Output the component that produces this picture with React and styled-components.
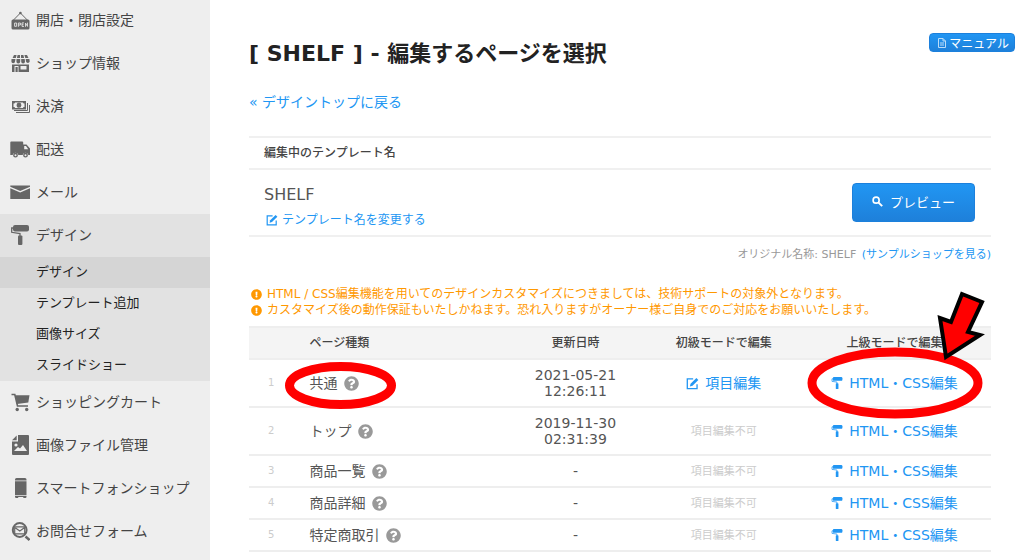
import React from 'react';
import styled, { createGlobalStyle, css } from 'styled-components';
import { FaExclamationCircle, FaQuestionCircle } from 'react-icons/fa';

const GlobalStyle = createGlobalStyle`
  * {
    box-sizing: border-box;
  }

  body {
    margin: 0;
    background: #fff;
    color: #555;
    font-family: 'DejaVu Sans', 'Noto Sans CJK JP', sans-serif;
    font-size: 14px;
    line-height: 16px;
  }

  a {
    color: #2196f3;
    text-decoration: none;
  }
`;

const Layout = styled.div`
  display: flex;
  height: 100vh;
  overflow: hidden;
`;

/* sidebar */
const Sidebar = styled.nav`
  flex: 0 0 210px;
  background: #eee;
`;

const Menu = styled.ul`
  margin: -1px 0 0;
  padding: 0;
  list-style: none;
`;

const MenuLink = styled.a`
  display: flex;
  align-items: center;
  gap: 6px;
  height: 43px;
  padding: 0 0 2px 10px;
  color: #444;
  background: ${props => props.$active ? '#e2e2e2' : 'transparent'};

  svg {
    flex: none;
    color: #666;
  }
`;

const SubMenu = styled.ul`
  margin: 0;
  padding: 0;
  list-style: none;
  background: #e2e2e2;
`;

const SubLink = styled.a`
  display: block;
  padding: 0 0 2px 36px;
  color: #222;
  font-size: 13px;
  line-height: 29px;
  ${props => props.$active && css`
    background: #d5d5d5;
  `}
`;

/* main */
const Main = styled.main`
  flex: 1;
  min-width: 0;
  padding: 33px 9px 0 39px;
`;

const Header = styled.header`
  display: flex;
  justify-content: space-between;
  align-items: flex-start;
`;

const Title = styled.h1`
  margin: 0;
  color: #222;
  font-size: 22px;
  line-height: 42px;
`;

const BlueButton = styled.button`
  display: flex;
  align-items: center;
  justify-content: center;
  border: 1px solid #1c80dc;
  border-radius: 4px;
  background: linear-gradient(#2196f3, #1e80da);
  color: #fff;
  font-family: inherit;
  cursor: pointer;
`;

const ManualButton = styled(BlueButton)`
  gap: 3px;
  height: 19px;
  padding: 0 5px 0 8px;
  font-size: 12px;
`;

const PreviewButton = styled(BlueButton)`
  gap: 7px;
  width: 123px;
  height: 39px;
  padding-bottom: 4px;
  font-size: 13px;
`;

const Content = styled.div`
  margin-right: 24px;
`;

const BackLink = styled.a`
  display: inline-block;
  margin-top: 17px;
  line-height: 20px;
`;

const TemplateBox = styled.section`
  margin-top: 24px;
  border-top: 2px solid #f0f0f0;
  border-bottom: 2px solid #f0f0f0;
`;

const TemplateHead = styled.h2`
  margin: 0;
  padding: 0 15px;
  border-bottom: 2px solid #f0f0f0;
  color: #444;
  font-size: 12px;
  font-weight: 500;
  line-height: 30px;
`;

const TemplateBody = styled.div`
  display: flex;
  align-items: center;
  justify-content: space-between;
  height: 65px;
  padding: 0 16px 0 15px;
`;

const TemplateInfo = styled.div`
  padding-top: 8px;
`;

const TemplateName = styled.div`
  margin-bottom: 8px;
  font-size: 16px;
  line-height: 18px;
`;

const RenameLink = styled.a`
  display: flex;
  align-items: center;
  gap: 4px;
  padding-left: 2px;
  font-size: 12px;
`;

const OriginalName = styled.p`
  margin: 10px 0 23px;
  text-align: right;
  color: #999;
  font-size: 11px;

  a {
    margin-left: 2px;
  }
`;

const Notice = styled.ul`
  margin: 0 0 8px;
  padding: 0 0 0 2px;
  list-style: none;
  color: #ff9800;
  font-size: 12px;

  li {
    display: flex;
    align-items: center;
    gap: 5px;
    white-space: nowrap;
  }
`;

const PageTable = styled.table`
  width: 100%;
  table-layout: fixed;
  border-collapse: collapse;

  th {
    height: 32px;
    padding: 0;
    border-top: 2px solid #eee;
    border-bottom: 2px solid #eee;
    background: #f4f4f4;
    color: #444;
    font-size: 12px;
    font-weight: 500;
  }

  td {
    height: 30px;
    padding: 6px 0;
    border-bottom: 2px solid #eee;
    text-align: center;
  }
`;

const Col = styled.col`
  width: ${props => props.$width};
`;

const NameHead = styled.th`
  padding-left: 16px !important;
  text-align: left;
`;

const NumberCell = styled.td`
  color: #ccc;
  font-size: 10px;
`;

const NameCell = styled.td`
  padding-left: 16px !important;
  text-align: left !important;
`;

const CellInner = styled.span`
  position: relative;
  display: inline-flex;
  align-items: center;
  gap: 6px;
  vertical-align: top;

  svg {
    flex: none;
  }
`;

const Help = styled(FaQuestionCircle)`
  color: #999;
`;

const DateTime = styled.time`
  display: block;
  padding: 1px 0;

  span {
    display: block;
  }
`;

const Disabled = styled.span`
  color: #ccc;
  font-size: 11px;
`;

/* hand-drawn marks that lie over the table */
const Mark = styled.svg`
  position: absolute;
  z-index: 1;
  top: ${props => props.$top};
  left: ${props => props.$left};
  overflow: visible;
  pointer-events: none;
`;

const Icon = ({ size = 20, children }) => (
  <svg width={size} height={size} viewBox="0 0 20 20" fill="currentColor" aria-hidden="true">
    {children}
  </svg>
);

const SignIcon = () => (
  <Icon>
    <path d="M3.5 10 10.4 3l6.9 7" fill="none" stroke="currentColor" />
    <circle cx="10.4" cy="3" r="1.3" />
    <rect x="1.5" y="9.5" width="18" height="10" rx="1.5" />
    <path d="M4.6 13h2v3.3h-2zM8.4 16.8V13h2v2h-2M14 12.9h-2v3.5h2M12 14.7h1.5M15.5 16.8V13l2 3.4v-3.8" fill="none" stroke="#e4e4e4" strokeWidth="0.9" />
  </Icon>
);

const ShopIcon = () => (
  <Icon>
    <path d="M4 2h2.6L5.8 5H2.6zM7.6 2h2.4v3H6.9zM11 2h2.4l.7 3H11zM14.4 2H17l1.5 3h-3.2zM1.5 6h4L5 8.5a1.8 1.8 0 0 1-3.6 0zM6.5 6h3.7v2.5a1.9 1.9 0 0 1-3.8 0zM11.2 6h3.5l.3 2.5a1.9 1.9 0 0 1-3.8 0zM15.7 6h3.7l.3 2.5a1.9 1.9 0 0 1-3.7 0z" />
    <path d="M2 11.5h17V19H2zM4.5 13v6h4v-6zM10.5 13v3.5h6V13z" fillRule="evenodd" />
    <path d="M5.5 14h2.2v5H5.5z" />
  </Icon>
);

const MoneyIcon = () => (
  <Icon>
    <path d="M2 5h14v8.5H2zM3.5 7.5V11c1 0 1.5.3 1.5 1h8c0-.7.5-1 1.5-1V7.5c-1 0-1.500-.3-1.500-1H5c0 .7-.5 1-1.500 1z" fillRule="evenodd" />
    <ellipse cx="9" cy="9.2" rx="2.3" ry="2.6" />
    <path d="M4 14.5h13.500V7M6 16.5h13.500V9" fill="none" stroke="currentColor" />
  </Icon>
);

const TruckIcon = () => (
  <Icon>
    <path d="M1.2 2.5h11a1 1 0 0 1 1 1v2h3.3L20 9.500V16h-1.600a3 3 0 0 0-5.800 0H8.400a3 3 0 0 0-5.800 0H.3V3.500a1 1 0 0 1 .9-1zM14.2 7v3.200h4L16 7z" fillRule="evenodd" />
    <circle cx="5.5" cy="16.2" r="1.7" fill="none" stroke="currentColor" strokeWidth="1.4" />
    <circle cx="15.5" cy="16.2" r="1.7" fill="none" stroke="currentColor" strokeWidth="1.4" />
  </Icon>
);

const MailIcon = () => (
  <Icon>
    <path d="M.3 3.5H20v1.300L10.200 9 .3 4.800z" />
    <path d="M.3 6.300 10.200 10.600 20 6.300V17H.3z" />
  </Icon>
);

const RollerIcon = ({ size }) => (
  <Icon size={size}>
    <rect x="3" y="0" width="16" height="6.4" rx="2" />
    <path d="M3 3H1.700v4.300l8.300 1.200V11" fill="none" stroke="currentColor" strokeWidth="1.3" />
    <rect x="8" y="10.5" width="4.4" height="9.5" rx="1" />
  </Icon>
);

const CartIcon = () => (
  <Icon>
    <path d="M1.500 2.500h3.300l2.700 11.500H18" fill="none" stroke="currentColor" strokeWidth="1.6" />
    <path d="M5.200 3.200h14.300l-1.200 7.300L7 12z" />
    <circle cx="7.2" cy="17.5" r="1.7" />
    <circle cx="16.7" cy="17.5" r="1.7" />
  </Icon>
);

const ImageIcon = () => (
  <Icon>
    <path d="M8 0h10a1 1 0 0 1 1 1v18a1 1 0 0 1-1 1H3a1 1 0 0 1-1-1V6.500h6zM4 16h13l-4-6-3 3.500L8 12z" fillRule="evenodd" />
    <path d="M6.700.4v4.800H2z" />
    <circle cx="6" cy="10" r="1.6" fill="#eee" />
  </Icon>
);

const PhoneIcon = () => (
  <Icon>
    <path d="M6.500 0H15a1.500 1.500 0 0 1 1.500 1.500v1H5v-1A1.500 1.500 0 0 1 6.500 0zM5 3.300h11.500V17H5zM5 17.800h11.500v1a1.200 1.200 0 0 1-1.200 1.200h-2v-1H8.200v1h-2A1.200 1.200 0 0 1 5 18.800z" />
  </Icon>
);

const ContactIcon = () => (
  <Icon>
    <circle cx="9.7" cy="9" r="6.9" fill="none" stroke="currentColor" strokeWidth="2" />
    <path d="M4.700 5.800h10v7h-10zM5.500 7l4.300 3L14 7" fill="#eee" stroke="currentColor" strokeWidth="1.2" />
    <path d="m15.500 15.500 4 3.500" stroke="currentColor" strokeWidth="2.4" />
  </Icon>
);

const EditIcon = ({ size }) => (
  <Icon size={size}>
    <path d="M11 3H2v15h15v-7" fill="none" stroke="currentColor" strokeWidth="2" />
    <path d="M6 14.500 7 10.500 16 1.500l3 3-9 9z" />
  </Icon>
);

const SearchIcon = () => (
  <Icon size={11}>
    <circle cx="7.5" cy="7.5" r="5.5" fill="none" stroke="currentColor" strokeWidth="3" />
    <path d="m12 12 6.500 6.500" stroke="currentColor" strokeWidth="3.5" />
  </Icon>
);

const DocIcon = () => (
  <svg width="8" height="10" viewBox="0 0 8 10" fill="none" stroke="#bbdcf9" aria-hidden="true">
    <path d="M.5.5H5L7.500 3v6.500h-7zM5 .5V3h2.500M2 5h4M2 7h4" />
  </svg>
);

const menu = [
  { label: '開店・閉店設定', icon: SignIcon },
  { label: 'ショップ情報', icon: ShopIcon },
  { label: '決済', icon: MoneyIcon },
  { label: '配送', icon: TruckIcon },
  { label: 'メール', icon: MailIcon },
  {
    label: 'デザイン',
    icon: RollerIcon,
    children: ['デザイン', 'テンプレート追加', '画像サイズ', 'スライドショー'],
  },
  { label: 'ショッピングカート', icon: CartIcon },
  { label: '画像ファイル管理', icon: ImageIcon },
  { label: 'スマートフォンショップ', icon: PhoneIcon },
  { label: 'お問合せフォーム', icon: ContactIcon },
];

const pages = [
  { name: '共通', date: '2021-05-21', time: '12:26:11', editable: true, marked: true },
  { name: 'トップ', date: '2019-11-30', time: '02:31:39' },
  { name: '商品一覧' },
  { name: '商品詳細' },
  { name: '特定商取引' },
  { name: 'カート内商品' },
];

const PageRow = ({ number, page }) => (
  <tr>
    <NumberCell>{number}</NumberCell>
    <NameCell>
      <CellInner>
        {page.name}
        <Help size={15} />
        {page.marked && (
          <Mark $top="-13px" $left="-25px" width="111" height="47">
            <ellipse cx="55.5" cy="23.5" rx="51" ry="19" fill="none" stroke="#f00" strokeWidth="9" />
          </Mark>
        )}
      </CellInner>
    </NameCell>
    <td>
      {page.date ? (
        <DateTime>
          <span>{page.date}</span>
          <span>{page.time}</span>
        </DateTime>
      ) : '-'}
    </td>
    <td>
      {page.editable ? (
        <CellInner as="a" href="#edit">
          <EditIcon size={13} />
          項目編集
        </CellInner>
      ) : (
        <Disabled>項目編集不可</Disabled>
      )}
    </td>
    <td>
      <CellInner as="a" href="#html">
        <RollerIcon size={12} />
        HTML・CSS編集
        {page.marked && (
          <Mark $top="-83px" $left="-24px" width="180" height="128">
            <ellipse cx="88" cy="91" rx="83" ry="31" fill="none" stroke="#f00" strokeWidth="9" />
            <path d="M155 2 175 10 161 40 173 43 139 65 133 26 144 30z" fill="#f00" stroke="#000" strokeWidth="4" />
          </Mark>
        )}
      </CellInner>
    </td>
  </tr>
);

const App = () => {
  return (
    <>
      <GlobalStyle />
      <Layout>
        <Sidebar>
          <Menu>
            {menu.map(({ label, icon: ItemIcon, children }) => (
              <li key={label}>
                <MenuLink href="#menu" $active={!!children}>
                  <ItemIcon />
                  {label}
                </MenuLink>
                {children && (
                  <SubMenu>
                    {children.map((child, i) => (
                      <li key={child}>
                        <SubLink href="#sub" $active={i === 0}>{child}</SubLink>
                      </li>
                    ))}
                  </SubMenu>
                )}
              </li>
            ))}
          </Menu>
        </Sidebar>

        <Main>
          <Header>
            <Title>[ SHELF ] - 編集するページを選択</Title>
            <ManualButton type="button">
              <DocIcon />
              マニュアル
            </ManualButton>
          </Header>

          <Content>
            <BackLink href="#top">« デザイントップに戻る</BackLink>

            <TemplateBox>
              <TemplateHead>編集中のテンプレート名</TemplateHead>
              <TemplateBody>
                <TemplateInfo>
                  <TemplateName>SHELF</TemplateName>
                  <RenameLink href="#rename">
                    <EditIcon size={12} />
                    テンプレート名を変更する
                  </RenameLink>
                </TemplateInfo>
                <PreviewButton type="button">
                  <SearchIcon />
                  プレビュー
                </PreviewButton>
              </TemplateBody>
            </TemplateBox>

            <OriginalName>
              オリジナル名称: SHELF <a href="#sample">(サンプルショップを見る)</a>
            </OriginalName>

            <Notice>
              <li>
                <FaExclamationCircle size={11} />
                HTML / CSS編集機能を用いてのデザインカスタマイズにつきましては、技術サポートの対象外となります。
              </li>
              <li>
                <FaExclamationCircle size={11} />
                カスタマイズ後の動作保証もいたしかねます。恐れ入りますがオーナー様ご自身でのご対応をお願いいたします。
              </li>
            </Notice>

            <PageTable>
              <colgroup>
                <Col $width="6%" />
                <Col $width="28%" />
                <Col $width="20%" />
                <Col $width="20%" />
                <Col $width="26%" />
              </colgroup>
              <thead>
                <tr>
                  <th aria-label="番号" />
                  <NameHead>ページ種類</NameHead>
                  <th>更新日時</th>
                  <th>初級モードで編集</th>
                  <th>上級モードで編集</th>
                </tr>
              </thead>
              <tbody>
                {pages.map((page, i) => (
                  <PageRow key={page.name} number={i + 1} page={page} />
                ))}
              </tbody>
            </PageTable>
          </Content>
        </Main>
      </Layout>
    </>
  );
};

export default App;
